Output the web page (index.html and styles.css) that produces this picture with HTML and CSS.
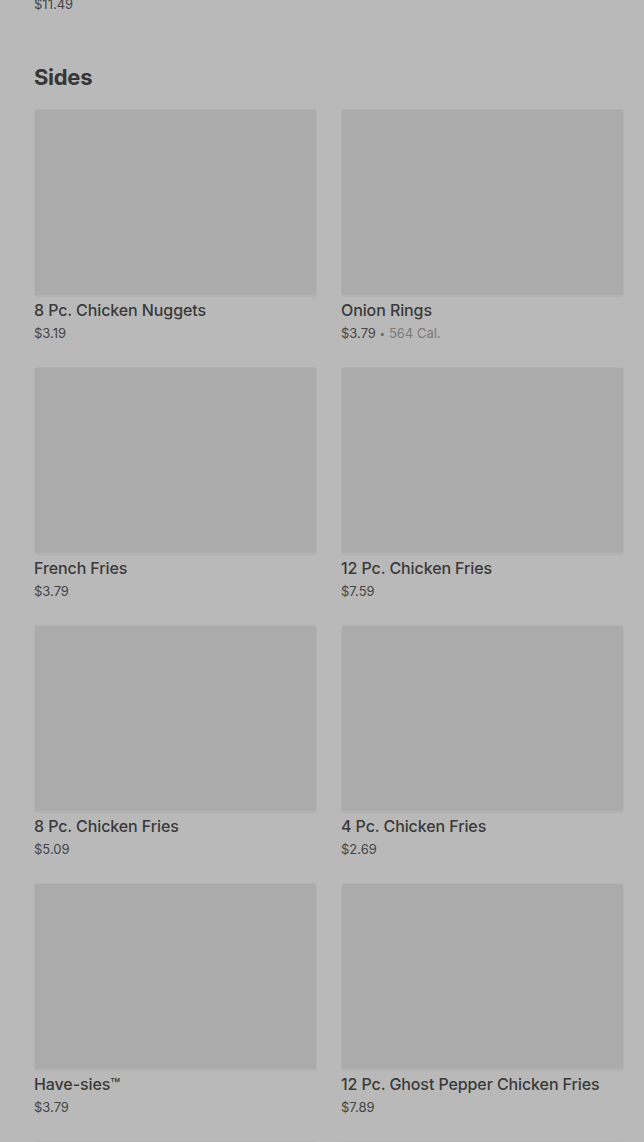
FILE: index.html
```html
<!DOCTYPE html>
<html>
<head>
<meta charset="utf-8">
<link rel="stylesheet" href="styles.css">
</head>
<body>
<div class="page">
  <div class="prev-price">$11.49</div>
  <h2 class="section-title">Sides</h2>
  <div class="grid">
    <div class="card"><div class="thumb"></div><div class="name">8 Pc. Chicken Nuggets</div><div class="meta">$3.19</div></div>
    <div class="card"><div class="thumb"></div><div class="name">Onion Rings</div><div class="meta">$3.79 <span class="dot">•</span> <span class="cal">564 Cal.</span></div></div>
    <div class="card"><div class="thumb"></div><div class="name">French Fries</div><div class="meta">$3.79</div></div>
    <div class="card"><div class="thumb"></div><div class="name">12 Pc. Chicken Fries</div><div class="meta">$7.59</div></div>
    <div class="card"><div class="thumb"></div><div class="name">8 Pc. Chicken Fries</div><div class="meta">$5.09</div></div>
    <div class="card"><div class="thumb"></div><div class="name">4 Pc. Chicken Fries</div><div class="meta">$2.69</div></div>
    <div class="card"><div class="thumb"></div><div class="name">Have-sies™</div><div class="meta">$3.79</div></div>
    <div class="card"><div class="thumb"></div><div class="name">12 Pc. Ghost Pepper Chicken Fries</div><div class="meta">$7.89</div></div>
    <div class="card"><div class="thumb"></div></div>
    <div class="card"><div class="thumb"></div></div>
  </div>
</div>
</body>
</html>
```
FILE: styles.css
```css
html, body {
  margin: 0;
  padding: 0;
  background: #b9b9b9;
  overflow: hidden;
  height: 1142px;
}
.page {
  padding: 0 20px 0 34px;
  font-family: Inter, "Liberation Sans", sans-serif;
  color: #3b3b3b;
}
.prev-price {
  margin-top: -5px;
  font-size: 13px;
  line-height: 18px;
  color: #454545;
}
.section-title {
  margin: 49px 0 17px;
  font-size: 22px;
  line-height: 30px;
  font-weight: 700;
  letter-spacing: -0.3px;
  color: #363636;
}
.grid {
  display: grid;
  grid-template-columns: 283px 283px;
  column-gap: 24px;
  row-gap: 25px;
}
.card {
  display: flex;
  flex-direction: column;
}
.thumb {
  height: 185px;
  background: #ababab;
  border: 1px solid #b3b3b3;
  border-radius: 3px;
  box-shadow: 0 1px 1px rgba(0,0,0,0.04);
}
.name {
  margin-top: 3px;
  font-size: 16px;
  line-height: 22px;
  font-weight: 500;
  letter-spacing: -0.1px;
  color: #3a3a3a;
}
.meta {
  margin-top: 3px;
  height: 18px;
  font-size: 13px;
  line-height: 18px;
  color: #454545;
}
.dot {
  font-size: 10px;
  line-height: 0;
  vertical-align: 1px;
  color: #6a6a6a;
}
.cal {
  color: #7a7a7a;
}
```
